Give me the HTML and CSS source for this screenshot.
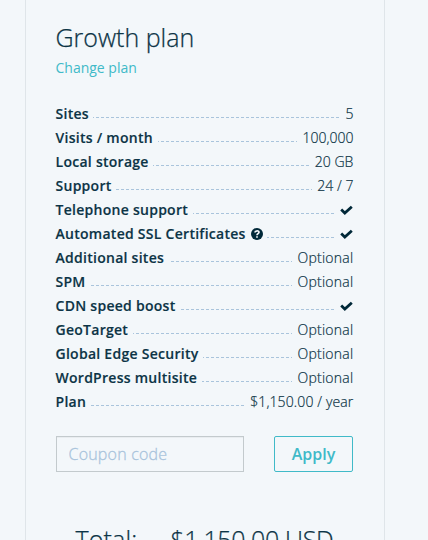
FILE: index.html
```html
<!DOCTYPE html>
<html lang="en"><head><meta charset="utf-8"><title>Growth plan</title><link rel="stylesheet" href="styles.css"></head>
<body>
<main class="plan">
<h1>Growth plan</h1>
<a class="change" href="#">Change plan</a>
<ul class="features">
<li><b>Sites</b><span>5</span></li>
<li><b>Visits / month</b><span>100,000</span></li>
<li><b>Local storage</b><span>20 GB</span></li>
<li><b>Support</b><span>24 / 7</span></li>
<li><b>Telephone support</b><span><svg class="check" viewBox="0 0 13 10"><path d="M1.2 4.6 4.8 8 11.8 1.7"/></svg></span></li>
<li><b>Automated SSL Certificates<svg class="help" viewBox="0 0 12 12"><circle cx="6" cy="6" r="6"/><path d="M4 4.5C4.3 2.2 8 2.3 8 4.3C8 5.7 6 5.6 6 7.2M6 8.2v1.6"/></svg></b><span><svg class="check" viewBox="0 0 13 10"><path d="M1.2 4.6 4.8 8 11.8 1.7"/></svg></span></li>
<li><b>Additional sites</b><span class="optional">Optional</span></li>
<li><b>SPM</b><span class="optional">Optional</span></li>
<li><b>CDN speed boost</b><span><svg class="check" viewBox="0 0 13 10"><path d="M1.2 4.6 4.8 8 11.8 1.7"/></svg></span></li>
<li><b>GeoTarget</b><span class="optional">Optional</span></li>
<li><b>Global Edge Security</b><span class="optional">Optional</span></li>
<li><b>WordPress multisite</b><span class="optional">Optional</span></li>
<li><b>Plan</b><span class="price">$1,150.00 / year</span></li>
</ul>
<form class="coupon"><input placeholder="Coupon code" aria-label="Coupon code"><button type="button">Apply</button></form>
<div class="total"><span>Total:</span><span>$1,150.00 USD</span></div>
</main>
</body></html>
```
FILE: styles.css
```css
* { box-sizing: border-box; }
body { margin: 0; height: 540px; overflow: hidden; background: #f3f7fa; font-family: "Open Sans", sans-serif; color: #0c3446; }
.plan { width: 360px; height: 540px; overflow: hidden; margin-left: 25px; padding: 19px 31px 0 29px; border: solid #dfe5e9; border-width: 0 1px; }
h1 { margin: 0; padding-left: .5px; font-size: 25px; line-height: 36px; font-weight: 300; -webkit-text-stroke: .25px; }
.change { display: block; margin-top: 3px; padding-left: .5px; font-size: 14px; line-height: 20px; color: #40bac8; text-decoration: none; }
.features { list-style: none; margin: 24px 0 0; padding: 0; font-size: 14px; line-height: 24px; }
.features li { display: flex; justify-content: space-between; height: 24px; background: repeating-linear-gradient(90deg, #a9c4dc 0 3px, transparent 3px 5px) 1px 15px / 100% 1px no-repeat; }
.features b, .features span { display: flex; align-items: center; white-space: pre; background: #f3f7fa; }
.features b { font-weight: 600; letter-spacing: .27px; padding: 0 4.6px 0 .5px; -webkit-text-stroke: .15px; }
.features span { font-weight: 300; padding-left: 5px; margin-right: -.4px; -webkit-text-stroke: .2px; }
.features .optional { letter-spacing: .25px; }
.features .price { letter-spacing: .12px; }
.check { width: 13px; height: 10px; fill: none; stroke: #002838; stroke-width: 2.8; }
.help { width: 12px; height: 12px; margin-left: 5px; fill: #002838; }
.help path { fill: none; stroke: #f4f8fb; stroke-width: 1.7; }
.coupon { display: flex; justify-content: space-between; margin: 22px 0 0 1px; }
.coupon input { width: 188px; height: 36px; padding: 0 11.5px; border: 1px solid #c3cacd; background: transparent; font: 300 16px "Open Sans", sans-serif; letter-spacing: .2px; box-shadow: inset 0 1px 0 #e9edf0; }
.coupon input::placeholder { color: #a9c4dc; -webkit-text-stroke: .3px; }
.coupon button { width: 79px; height: 36px; padding: 0; border: 1px solid #40bac8; border-radius: 2px; background: transparent; color: #40bac8; font: 600 16px "Open Sans", sans-serif; }
.total { display: flex; gap: 33px; margin: 49px 0 0 20.5px; font-size: 25px; line-height: 36px; font-weight: 300; letter-spacing: -.3px; white-space: nowrap; -webkit-text-stroke: .25px; }
.total span:first-child { letter-spacing: .15px; }
```
